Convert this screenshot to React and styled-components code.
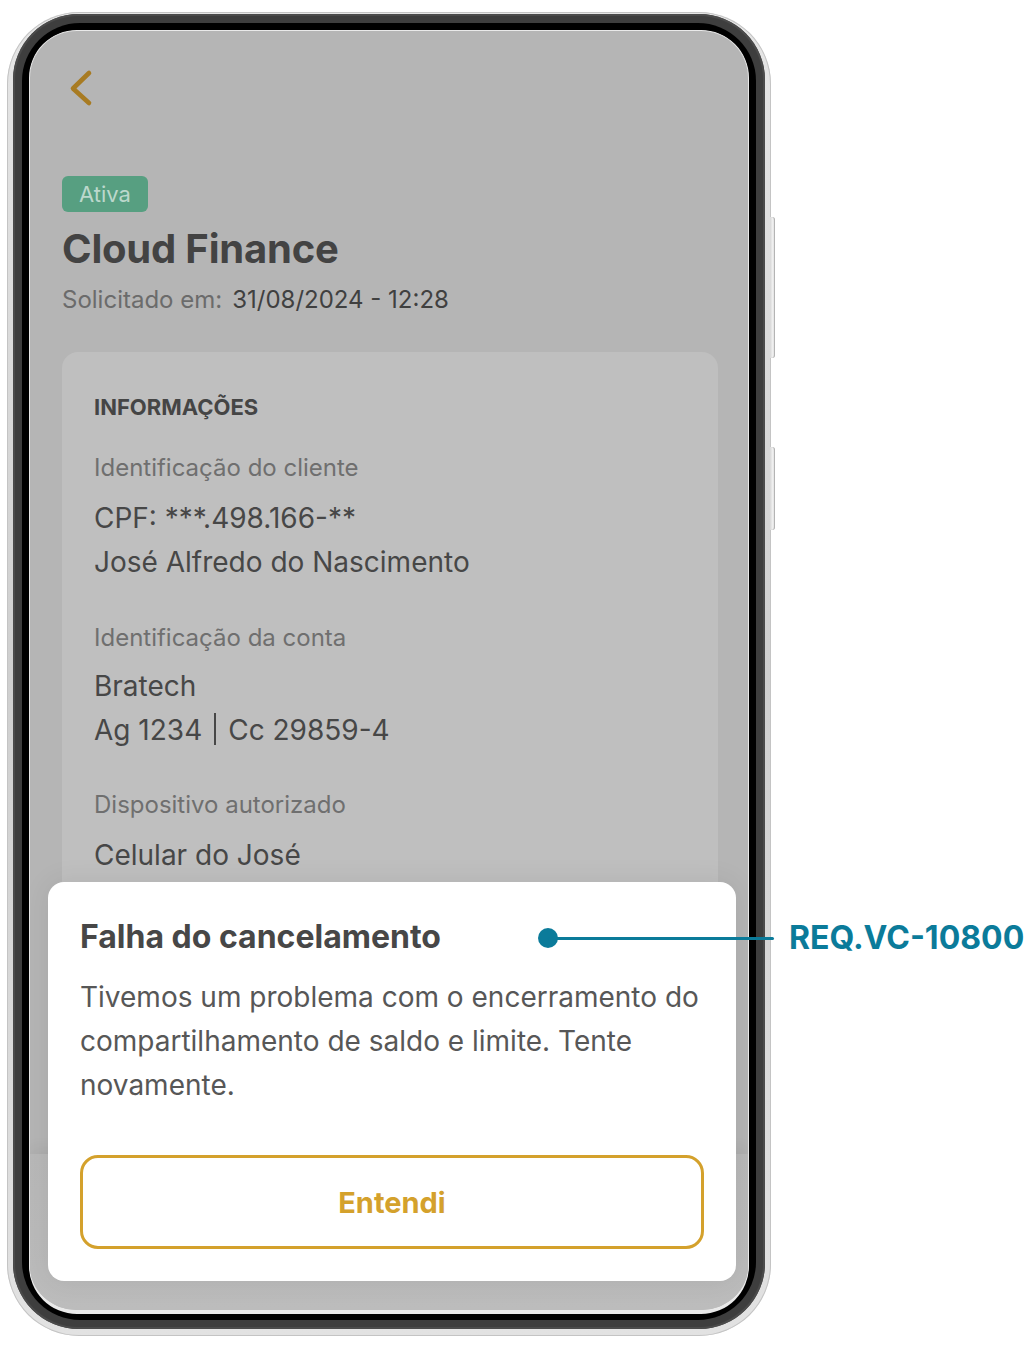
import React from "react";
import styled, { createGlobalStyle } from "styled-components";

const Global = createGlobalStyle`
  html, body { margin: 0; padding: 0; background: #ffffff; }
  body { font-family: Inter, "Noto Sans", Roboto, sans-serif; -webkit-font-smoothing: antialiased; }
  * { box-sizing: border-box; }
`;

const Page = styled.div`
  position: relative;
  width: 1028px;
  height: 1348px;
  padding: 12px 0 0 7px;
  overflow: hidden;
`;

const Phone = styled.div`
  position: relative;
  width: 764px;
  height: 1324px;
  border-radius: 72px;
  padding: 2px 6px 7px 6px;
  background: linear-gradient(180deg, #e6e6e6 0%, #cfcfcf 50%, #e2e2e2 100%);
  box-shadow: inset 0 0 0 1px #c4c4c4;
`;

const SideButton = styled.div`
  position: absolute;
  right: -4px;
  top: ${(p) => p.$top}px;
  width: 5px;
  height: ${(p) => p.$h}px;
  border-radius: 0 3px 3px 0;
  background: linear-gradient(90deg, #d6d6d6, #f4f4f4 60%, #bdbdbd);
  box-shadow: inset -1px 0 0 #b4b4b4;
`;

const Bezel = styled.div`
  height: 100%;
  border-radius: 66px;
  padding: 9px;
  background: #3e3e3e;
  box-shadow: inset 0 0 0 2px #4b4b4b;
`;

const Black = styled.div`
  height: 100%;
  border-radius: 58px;
  padding: 7px 7px 6px 7px;
  background: #000;
`;

const Screen = styled.div`
  position: relative;
  height: 100%;
  border-radius: 48px;
  border: 1px solid #e9e9e9;
  border-bottom-width: 4px;
  background: #b5b5b5;
  overflow: hidden;
  display: flex;
  flex-direction: column;
`;

const Content = styled.div`
  flex: 1;
  display: flex;
  flex-direction: column;
  padding: 36px 30px 0 32px;
  min-height: 0;
`;

const BackButton = styled.button`
  all: unset;
  width: 28px;
  height: 40px;
  margin-left: 4px;
  display: flex;
`;

const Badge = styled.span`
  align-self: flex-start;
  display: inline-flex;
  align-items: center;
  height: 36px;
  margin-top: 69px;
  padding: 0 17px;
  border-radius: 6px;
  background: #579f81;
  color: #bcd8cc;
  font-size: 22px;
  font-weight: 400;
`;

const Title = styled.h1`
  margin: 15px 0 0;
  font-size: 40px;
  line-height: 44px;
  font-weight: 700;
  color: #434343;
  letter-spacing: -0.2px;
`;

const Requested = styled.div`
  margin-top: 15px;
  font-size: 24px;
  line-height: 28px;
  color: #404040;
`;

const Muted = styled.span`
  color: #6b6b6b;
  margin-right: 10px;
`;

const Card = styled.section`
  flex: 1;
  margin-top: 38px;
  border-radius: 16px 16px 0 0;
  background: #bfbfbf;
  padding: 41px 32px 0 32px;
  display: flex;
  flex-direction: column;
`;

const CardHeading = styled.h2`
  margin: 0;
  font-size: 22px;
  line-height: 28px;
  font-weight: 700;
  color: #454545;
`;

const Group = styled.div`
  margin-top: ${(p) => p.$gap}px;
  display: flex;
  flex-direction: column;
`;

const Label = styled.div`
  font-size: 24px;
  line-height: 28px;
  color: #6f6f6f;
  margin-bottom: ${(p) => p.$after ?? 14}px;
`;

const Value = styled.div`
  font-size: 28px;
  line-height: 44px;
  color: #474747;
`;

const Divider = styled.span`
  display: inline-block;
  width: 2px;
  height: 32px;
  margin: 0 12px -5px;
  background: #474747;
`;

const BottomBar = styled.div`
  height: 156px;
  background: linear-gradient(180deg, #b8b8b8, #bcbcbc);
  box-shadow: 0 -6px 14px rgba(0, 0, 0, 0.05);
`;

const Modal = styled.div`
  position: absolute;
  left: 18px;
  bottom: 29px;
  width: 688px;
  height: 399px;
  border-radius: 16px;
  background: #ffffff;
  padding: 37px 32px 32px 32px;
  display: flex;
  flex-direction: column;
  box-shadow: 0 0 28px rgba(0, 0, 0, 0.08);
`;

const ModalTitle = styled.h3`
  margin: 0;
  font-size: 32px;
  line-height: 36px;
  font-weight: 700;
  color: #474747;
`;

const ModalBody = styled.p`
  margin: 20px 0 0;
  font-size: 28px;
  line-height: 44px;
  color: #575757;
`;

const OutlineButton = styled.button`
  all: unset;
  box-sizing: border-box;
  margin-top: auto;
  height: 94px;
  border: 3px solid #d4a12c;
  border-radius: 18px;
  display: flex;
  align-items: center;
  justify-content: center;
  font-family: Inter, sans-serif;
  font-size: 29px;
  font-weight: 700;
  color: #d4a12c;
`;

const Pin = styled.div`
  position: absolute;
  left: 538px;
  top: 918px;
  height: 40px;
  display: flex;
  align-items: center;
`;

const Dot = styled.span`
  width: 20px;
  height: 20px;
  border-radius: 50%;
  background: #0b7b9a;
`;

const Line = styled.span`
  width: 226px;
  height: 3px;
  margin-left: -10px;
  background: #0b7b9a;
  border-radius: 2px;
`;

const Tag = styled.span`
  margin-left: 15px;
  font-size: 32px;
  line-height: 40px;
  font-weight: 700;
  color: #0b7b9a;
`;

export default function App() {
  return (
    <>
      <Global />
      <Page>
        <Phone>
          <SideButton $top={205} $h={141} />
          <SideButton $top={435} $h={83} />
          <Bezel>
            <Black>
              <Screen>
                <Content>
                  <BackButton aria-label="Voltar">
                    <svg width="28" height="40" viewBox="0 0 28 40" fill="none">
                      <polyline
                        points="23,6 7,21.5 23,36"
                        stroke="#a87b22"
                        strokeWidth="4.6"
                        strokeLinecap="round"
                        strokeLinejoin="round"
                      />
                    </svg>
                  </BackButton>
                  <Badge>Ativa</Badge>
                  <Title>Cloud Finance</Title>
                  <Requested>
                    <Muted>Solicitado em:</Muted>31/08/2024 - 12:28
                  </Requested>
                  <Card>
                    <CardHeading>INFORMAÇÕES</CardHeading>
                    <Group $gap={33}>
                      <Label>Identificação do cliente</Label>
                      <Value>CPF: ***.498.166-**</Value>
                      <Value>José Alfredo do Nascimento</Value>
                    </Group>
                    <Group $gap={40}>
                      <Label $after={12}>Identificação da conta</Label>
                      <Value>Bratech</Value>
                      <Value>
                        Ag 1234<Divider />Cc 29859-4
                      </Value>
                    </Group>
                    <Group $gap={39}>
                      <Label>Dispositivo autorizado</Label>
                      <Value>Celular do José</Value>
                    </Group>
                  </Card>
                </Content>
                <BottomBar />
                <Modal role="dialog">
                  <ModalTitle>Falha do cancelamento</ModalTitle>
                  <ModalBody>
                    Tivemos um problema com o encerramento do compartilhamento de saldo e limite. Tente novamente.
                  </ModalBody>
                  <OutlineButton>Entendi</OutlineButton>
                </Modal>
              </Screen>
            </Black>
          </Bezel>
        </Phone>
        <Pin>
          <Dot />
          <Line />
          <Tag>REQ.VC-10800</Tag>
        </Pin>
      </Page>
    </>
  );
}
